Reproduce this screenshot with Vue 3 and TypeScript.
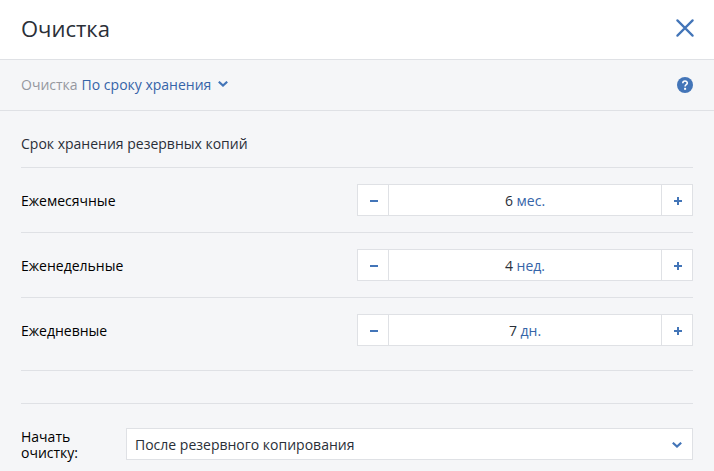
<template>
  <div class="panel">
    <header class="panel-header">
      <h1 class="panel-title">Очистка</h1>
      <button class="close-btn" aria-label="Закрыть">
        <svg width="18" height="18" viewBox="0 0 18 18">
          <path d="M1.4 1.4L16.6 16.6M16.6 1.4L1.4 16.6" />
        </svg>
      </button>
    </header>

    <div class="mode-bar">
      <span class="mode-label">Очистка</span>
      <a class="mode-link">{{ mode }}</a>
      <svg class="chevron" width="10" height="6" viewBox="0 0 10 6">
        <path d="M0.8 0.7L5 4.6L9.2 0.7" />
      </svg>
      <svg class="help" width="16" height="16" viewBox="0 0 16 16">
        <circle cx="8" cy="8" r="8" />
        <path d="M5.8 6.2C5.8 3.3 10.3 3.4 10.3 6C10.3 7.6 8.1 7.6 8.1 9.4" />
        <rect x="7.1" y="10.8" width="2" height="2" />
      </svg>
    </div>

    <main class="content">
      <h2 class="section-title">Срок хранения резервных копий</h2>
      <div v-for="rule in rules" :key="rule.label" class="rule">
        <span class="rule-label">{{ rule.label }}</span>
        <div class="stepper">
          <button class="step" @click="change(rule, -1)">
            <svg width="8" height="8" viewBox="0 0 8 8"><path d="M0 4H8" /></svg>
          </button>
          <div class="value">
            {{ rule.count }} <span class="unit">{{ rule.unit }}</span>
          </div>
          <button class="step" @click="change(rule, 1)">
            <svg width="8" height="8" viewBox="0 0 8 8"><path d="M0 4H8M4 0V8" /></svg>
          </button>
        </div>
      </div>

      <div class="start">
        <label class="start-label">Начать очистку:</label>
        <div class="select">
          <span>{{ startAt }}</span>
          <svg class="chevron" width="10" height="6" viewBox="0 0 10 6">
            <path d="M0.8 0.7L5 4.6L9.2 0.7" />
          </svg>
        </div>
      </div>
    </main>
  </div>
</template>

<script setup lang="ts">
import { ref } from "vue";

interface Rule {
  label: string;
  count: number;
  unit: string;
}

const mode = ref("По сроку хранения");
const startAt = ref("После резервного копирования");
const rules = ref<Rule[]>([
  { label: "Ежемесячные", count: 6, unit: "мес." },
  { label: "Еженедельные", count: 4, unit: "нед." },
  { label: "Ежедневные", count: 7, unit: "дн." },
]);

const change = (rule: Rule, delta: number) => {
  rule.count = Math.max(1, rule.count + delta);
};
</script>

<style>
body {
  margin: 0;
  overflow: hidden;
}
</style>

<style scoped>
.panel {
  height: 471px;
  overflow: hidden;
  box-sizing: border-box;
  background: #f5f6f8;
  color: #2a2f38;
  font-family: "Open Sans", "Noto Sans", sans-serif;
  font-size: 14px;
  line-height: 16px;
}
.panel-header {
  display: flex;
  align-items: center;
  justify-content: space-between;
  box-sizing: border-box;
  height: 60px;
  padding: 0 20px 3px 21px;
  background: #fff;
  border-bottom: 1px solid #dfe1e5;
}
.panel-title {
  margin: 0;
  font-size: 22px;
  font-weight: 400;
  line-height: 30px;
}
button {
  display: flex;
  align-items: center;
  justify-content: center;
  padding: 0;
  border: 0;
  background: none;
}
svg {
  display: block;
  fill: none;
  stroke: #4375b8;
  stroke-width: 2;
}
.close-btn svg {
  stroke-width: 2.2;
  stroke-linecap: round;
}
.mode-bar {
  display: flex;
  align-items: center;
  box-sizing: border-box;
  height: 51px;
  padding: 0 21px;
  border-bottom: 1px solid #dfe1e5;
}
.mode-label {
  margin-right: 4px;
  color: #95989f;
}
.mode-link {
  margin-right: 7px;
  color: #3564a8;
}
.chevron {
  stroke-width: 2.1;
}
.mode-bar .chevron {
  margin-bottom: 2px;
}
.help {
  margin-left: auto;
  stroke: #fff;
  stroke-width: 1.6;
}
.help circle {
  fill: #4375b8;
  stroke: none;
}
.help rect {
  fill: #fff;
  stroke: none;
}
.content {
  padding: 0 21px;
}
.section-title {
  box-sizing: border-box;
  height: 57px;
  margin: 0;
  padding-top: 25px;
  border-bottom: 1px solid #dfe1e5;
  font-size: 14px;
  font-weight: 400;
}
.rule {
  display: flex;
  align-items: center;
  justify-content: space-between;
  box-sizing: border-box;
  height: 65px;
  border-bottom: 1px solid #dfe1e5;
  color: #000;
}
.rule:nth-of-type(3) {
  height: 73px;
  padding-bottom: 8px;
}
.rule-label {
  padding-top: 2px;
}
.stepper {
  display: flex;
  box-sizing: border-box;
  width: 336px;
  height: 32px;
  border: 1px solid #dfe1e5;
  background: #fff;
}
.step {
  box-sizing: border-box;
  width: 30px;
  padding: 2px 0 0 2px;
}
.value {
  flex: 1;
  border: solid #dfe1e5;
  border-width: 0 1px;
  color: #2a2f38;
  line-height: 32px;
  text-align: center;
}
.unit {
  color: #3564a8;
}
.start {
  display: flex;
  align-items: flex-start;
  margin-top: 32px;
  padding-top: 24px;
  border-top: 1px solid #dfe1e5;
}
.start-label {
  box-sizing: border-box;
  width: 105px;
  padding-top: 1px;
  color: #000;
}
.select {
  display: flex;
  flex: 1;
  align-items: center;
  justify-content: space-between;
  box-sizing: border-box;
  height: 32px;
  padding: 2px 10px 0 8px;
  border: 1px solid #dfe1e5;
  background: #fff;
}
</style>
